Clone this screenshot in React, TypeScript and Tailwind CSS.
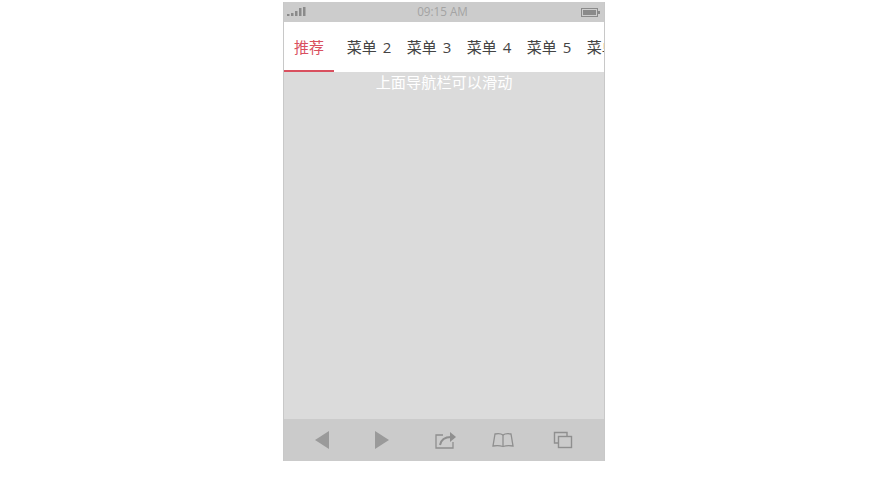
const tabs = ["菜单 2", "菜单 3", "菜单 4", "菜单 5", "菜单 6"];

function Signal() {
	return (
		<svg width="19" height="10" viewBox="0 0 19 10" fill="#8a8a8a">
			<rect x="0" y="7" width="2.5" height="2" />
			<rect x="4" y="6" width="2.5" height="3" />
			<rect x="8" y="4" width="2.5" height="5" />
			<rect x="12" y="1" width="2.5" height="8" />
			<rect x="16" y="0" width="2.5" height="9" />
		</svg>
	);
}

function Battery() {
	return (
		<svg width="19" height="9" viewBox="0 0 19 9">
			<rect x="0.5" y="0.5" width="16" height="8" fill="none" stroke="#8a8a8a" />
			<rect x="2" y="2" width="13" height="5" fill="#8a8a8a" />
			<rect x="17" y="3" width="2" height="3" fill="#8a8a8a" />
		</svg>
	);
}

function BackIcon() {
	return (
		<svg width="16" height="18" viewBox="0 0 16 18" fill="#9a9a9a">
			<path d="M15 0v18L1 9z" />
		</svg>
	);
}

function ForwardIcon() {
	return (
		<svg width="16" height="18" viewBox="0 0 16 18" fill="#9a9a9a">
			<path d="M1 0v18l14-9z" />
		</svg>
	);
}

function ShareIcon() {
	return (
		<svg width="24" height="20" viewBox="0 0 24 20" fill="none" stroke="#8f8f8f" strokeWidth="1.3">
			<path d="M9 5H2v13h17v-6" />
			<path d="M6 15c1-5 5-8 11-8" strokeWidth="2" />
			<path d="M16 2l6 5-6 5z" fill="#8f8f8f" stroke="none" />
		</svg>
	);
}

function BookIcon() {
	return (
		<svg width="24" height="16" viewBox="0 0 24 16" fill="none" stroke="#8f8f8f" strokeWidth="1.3">
			<path d="M12 3C10 1.500 6 1.500 4 2L2 14c3-0.500 7-0.500 10 0.500C15 13.500 19 13.500 22 14L20 2C18 1.500 14 1.500 12 3z" />
			<path d="M12 3v11" />
		</svg>
	);
}

function TabsIcon() {
	return (
		<svg width="20" height="18" viewBox="0 0 20 18" fill="none" stroke="#8f8f8f" strokeWidth="1.4">
			<path d="M5 12H1.500V1.500H14V5" />
			<rect x="5.500" y="5.500" width="13" height="11" />
		</svg>
	);
}

export default function App() {
	return (
		<div className="flex h-[500px] w-full justify-center bg-white pt-[2px] font-['Open_Sans','Noto_Sans_CJK_SC',sans-serif]">
			<div className="flex h-[459px] w-[322px] flex-col border-x border-[#c8c8c8] bg-[#dbdbdb]">
				<div className="flex h-5 shrink-0 items-center justify-between bg-[#cccccc] pl-[3px] pr-[4px]">
					<Signal />
					<span className="mr-[2px] text-[11.7px] text-[#a3a3a3]">09:15 AM</span>
					<Battery />
				</div>
				<div className="flex h-[50px] shrink-0 overflow-hidden bg-white text-[15px] text-[#444444] [word-spacing:2px]">
					<div className="mr-[5px] flex w-[50px] shrink-0 items-center justify-center border-b-2 border-[#d9505f] pt-[2px] text-[#d9505f]">
						推荐
					</div>
					{tabs.map((t) => (
						<div key={t} className="flex w-[60px] shrink-0 items-center justify-center whitespace-nowrap">
							{t}
						</div>
					))}
				</div>
				<div className="flex-1 text-center text-[15.2px] leading-[20px] text-white">上面导航栏可以滑动</div>
				<div className="flex h-[42px] shrink-0 items-center bg-[#cbcbcb] pl-[30px]">
					<div className="w-[60px]"><BackIcon /></div>
					<div className="w-[60px]"><ForwardIcon /></div>
					<div className="w-[57px]"><ShareIcon /></div>
					<div className="w-[62px]"><BookIcon /></div>
					<TabsIcon />
				</div>
			</div>
		</div>
	);
}
